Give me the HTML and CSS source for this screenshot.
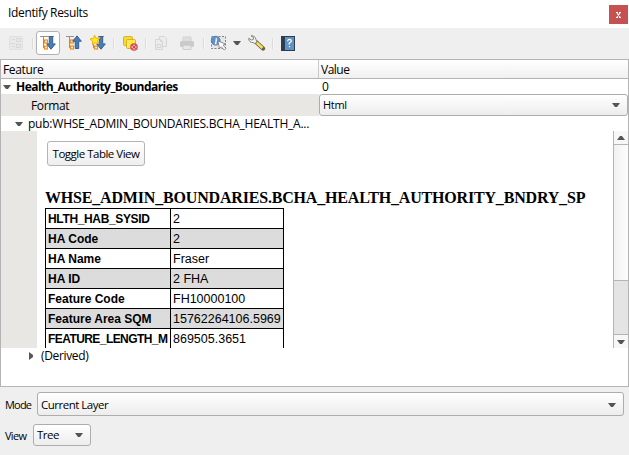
FILE: index.html
```html
<!DOCTYPE html>
<html lang="en">
<head>
<meta charset="utf-8">
<title>Identify Results</title>
<link rel="stylesheet" href="styles.css">
</head>
<body>
<div class="panel">
  <header class="titlebar"><span class="title">Identify Results</span>
    <button class="close" aria-label="Close"><svg width="5" height="6" viewBox="0 0 5 6"><path d="M0 .5h2M3 .5h2M0 5.500h2M3 5.500h2M1 1l3 4M4 1L1 5" stroke="#fff" stroke-width="1.200"/></svg></button>
  </header>
  <div class="toolbar">
    <span class="tool"><svg width="18" height="18" viewBox="0 0 18 18" fill="none" stroke="#d8d8d8"><rect x="2.500" y="2.500" width="13" height="13" rx="1" fill="#e9e9e9" stroke="#e0e0e0"/><path d="M5 5.500h3M5 12.500h3"/><rect x="9.500" y="4.500" width="4" height="3"/><rect x="9.500" y="10.500" width="4" height="3"/><path d="M3 9.500h5"/></svg></span>
    <i class="sep"></i>
    <span class="tool active"><svg width="18" height="18" viewBox="0 0 18 18"><path d="M1 2.500h14M4.500 2v12M4 7.500h3M4 13.500h3" fill="none" stroke="#92938d"/><g fill="#fff3df" stroke="#f58b1b" stroke-width="1.200"><rect x="5.500" y="6" width="3" height="3"/><rect x="5.500" y="12" width="3" height="3"/></g><path d="M10.300 2.500h3.400v7.400h2.600L12 15.200 7.700 9.900h2.600z" fill="#4b7db3" stroke="#315f91"/></svg></span>
    <span class="tool up"><svg width="18" height="18" viewBox="0 0 18 18"><path d="M1 2.500h8M4.500 2v12M4 7.500h3M4 13.500h3" fill="none" stroke="#92938d"/><g fill="#fff3df" stroke="#f58b1b" stroke-width="1.200"><rect x="5.500" y="6" width="3" height="3"/><rect x="5.500" y="12" width="3" height="3"/></g><path d="M10.300 14.500V7.200H7.700L12 1.900l4.300 5.300h-2.600v7.300z" fill="#4b7db3" stroke="#315f91"/></svg></span>
    <span class="tool star"><svg width="18" height="18" viewBox="0 0 18 18"><path d="M9 2.500h6M4.500 8v6M4 13.500h3" fill="none" stroke="#92938d"/><rect x="5.500" y="12" width="3" height="3" fill="#fff3df" stroke="#f58b1b" stroke-width="1.200"/><path d="M10.300 2.500h3.400v7.400h2.600L12 15.200 7.700 9.900h2.600z" fill="#4b7db3" stroke="#315f91"/><path d="M5.600 1.300l1.300 2.900 4-.5-2.500 3 1.500 3-3.500-1-3 2.200.2-3.700L1 5l3.400-.8z" fill="#ffea22" stroke="#f0ad15"/></svg></span>
    <i class="sep"></i>
    <span class="tool clear"><svg width="18" height="18" viewBox="0 0 18 18"><rect x="2.500" y="2.500" width="9" height="9" rx="1" fill="#f5d934" stroke="#d4b522"/><rect x="5.500" y="5.500" width="9" height="9" rx="1" fill="#fce94f" stroke="#d4b522"/><circle cx="13" cy="13" r="3.200" fill="#f0a8a8" stroke="#d7474b" stroke-width="1.200"/><path d="M11 11l4 4M15 11l-4 4" stroke="#d7474b"/></svg></span>
    <i class="sep"></i>
    <span class="tool copy"><svg width="18" height="18" viewBox="0 0 18 18" fill="#ececec" stroke="#d6d6d6"><path d="M7.500 2.500h5l2 2v8h-7z"/><path d="M3.500 5.500h5l2 2v8h-7zM8.500 5.500v2h2M5 10.500h4v3H5z"/></svg></span>
    <span class="tool print"><svg width="18" height="18" viewBox="0 0 18 18"><path d="M5 3h8v5H5z" fill="#dedede" stroke="#d2d2d2"/><rect x="2" y="7" width="14" height="6" rx="1.500" fill="#cacaca"/><path d="M5 11.500h8v4H5z" fill="#e7e7e7" stroke="#cfcfcf"/></svg></span>
    <i class="sep"></i>
    <span class="tool identify"><svg width="20" height="18" viewBox="0 0 20 18"><path d="M2.500 2.500h14v12h-14z" fill="#e7e7e7" stroke="#808080" stroke-dasharray="2 1.500"/><circle cx="6.700" cy="6.700" r="4.400" fill="#5c91ca" stroke="#4e80b6"/><path d="M6.500 6h1l-1 3.500h1M7.300 3.700v1" fill="none" stroke="#fff" stroke-width="1.300"/><path d="M9 7l7.500 3-2.500 1.200 3 3.300-1.800 1.500-2.900-3.300-1.800 2z" fill="#fff" stroke="#777" stroke-width=".8"/></svg></span>
    <svg class="arrow toolarrow" width="8" height="4"><path d="M0 0h8L5 4H3z"/></svg>
    <span class="tool wrench"><svg width="20" height="18" viewBox="0 0 20 18"><path d="M9 8l7 6.500" stroke="#6d6040" stroke-width="4.300" stroke-linecap="round"/><path d="M9.800 8.700l5.700 5.300" stroke="#f4dc62" stroke-width="2.600"/><path d="M4 1.800l2.500 1.700-.2 2L4.500 6 1.700 4.300c-.1 3 2.100 4.700 4.400 4.200l1.800 1.200 2-2-1-2.200C8.700 3 6.500 1.300 4 1.800z" fill="#f4f4f0" stroke="#85857e"/></svg></span>
    <i class="sep"></i>
    <span class="tool help"><svg width="18" height="18" viewBox="0 0 18 18"><path d="M2 2h14v15H2z" fill="#2e3c50"/><path d="M6 3h9v13H6z" fill="#6092c6"/><path d="M8.800 7.200V6.500Q9 5.300 10.500 5.300T12.300 6.700Q12.300 7.700 11 8.500T10.500 10.500M10.500 12v1.300" fill="none" stroke="#fff" stroke-width="1.300"/></svg></span>
  </div>
  <main class="tree">
    <div class="row head"><div class="cell"><span>Feature</span></div><div class="cell val"><span class="t-value">Value</span></div></div>
    <div class="row top"><svg class="arrow" width="8" height="4"><path d="M0 0h8L5 4H3z"/></svg><b class="t-health">Health_Authority_Boundaries</b><span class="zero">0</span></div>
    <div class="row format"><div class="label"><span>Format</span></div><div class="combo"><span class="t-html">Html</span><svg class="arrow" width="8" height="4"><path d="M0 0h8L5 4H3z"/></svg></div></div>
    <div class="row pub"><svg class="arrow" width="8" height="4"><path d="M0 0h8L5 4H3z"/></svg><span class="t-pub">pub:WHSE_ADMIN_BOUNDARIES.BCHA_HEALTH_A...</span></div>
    <div class="view">
      <div class="content">
        <button class="toggle">Toggle Table View</button>
        <h3>WHSE_ADMIN_BOUNDARIES.BCHA_HEALTH_AUTHORITY_BNDRY_SP</h3>
        <table>
          <tr><th class="tight">HLTH_HAB_SYSID</th><td>2</td></tr>
          <tr><th>HA Code</th><td>2</td></tr>
          <tr><th>HA Name</th><td>Fraser</td></tr>
          <tr><th>HA ID</th><td>2 FHA</td></tr>
          <tr><th>Feature Code</th><td>FH10000100</td></tr>
          <tr><th>Feature Area SQM</th><td>15762264106.5969</td></tr>
          <tr><th class="tighter">FEATURE_LENGTH_M</th><td>869505.3651</td></tr>
        </table>
      </div>
      <div class="scroll"><div class="sbtn"><svg class="arrow" width="8" height="4"><path d="M3 0h2l3 4H0z"/></svg></div><div class="thumb"></div><div class="track"></div><div class="sbtn"><svg class="arrow" width="8" height="4"><path d="M0 0h8L5 4H3z"/></svg></div></div>
    </div>
    <div class="row derived"><svg class="arrow" width="4" height="8"><path d="M0 0l4 3v2L0 8z"/></svg><span>(Derived)</span></div>
  </main>
  <footer>
    <div class="field mode"><label>Mode</label><div class="combo"><span>Current Layer</span><svg class="arrow" width="8" height="4"><path d="M0 0h8L5 4H3z"/></svg></div></div>
    <div class="field viewsel"><label>View</label><div class="combo"><span class="t-tree">Tree</span><svg class="arrow" width="8" height="4"><path d="M0 0h8L5 4H3z"/></svg></div></div>
  </footer>
</div>
</body>
</html>
```
FILE: styles.css
```css
* { box-sizing: border-box; }
body { margin: 0; overflow: hidden; background: #efefef; color: #000; font: 12px/16px "Open Sans", "Noto Sans", sans-serif; letter-spacing: -.35px; }
svg { display: block; flex: none; }
button { font: inherit; letter-spacing: inherit; color: inherit; padding: 0; }
.panel { width: 629px; height: 455px; display: flex; flex-direction: column; white-space: nowrap; }
.titlebar { height: 28px; background: #fff; display: flex; align-items: flex-start; justify-content: space-between; padding: 5px 1px 0 8px; }
.close { width: 19px; height: 19px; border: 0; background: #c75050; display: grid; place-items: center; }
.toolbar { height: 31px; display: flex; align-items: center; padding: 0 7px 1px; }
.tool { flex: none; width: 18px; height: 24px; display: grid; place-items: center; }
.sep { flex: none; width: 2px; height: 11px; background: #dadada; border-right: 1px solid #f8f8f8; margin-left: 7px; }
.active { width: 24px; border: 1px solid #b2b2b2; border-radius: 3px; background: #fff; margin-left: 2px; }
.up { margin-left: 5px; }
.star { margin-left: 6px; }
.star + .sep { margin-left: 6px; }
.clear { margin-left: 6px; }
.clear + .sep { margin-left: 6px; }
.copy { margin-left: 5px; }
.print { margin-left: 8px; }
.print + .sep { margin-left: 7px; }
.identify, .wrench { width: 20px; }
.identify { margin-left: 4px; }
.toolarrow { margin-left: 4px; }
.wrench { margin-left: 6px; }
.wrench + .sep { margin-left: 5px; }
.help { margin-left: 5px; }
.arrow { fill: #555; }
.tree { height: 328px; background: #fff; border: 1px solid #b4b4b4; }
.row { display: flex; align-items: center; }
.head { height: 19px; border-bottom: 1px solid #b4b4b4; background: linear-gradient(#fff, #f0f0f0); }
.head .cell { flex: none; width: 317px; padding: 1px 0 0 2px; }
.head .val { width: 310px; border-left: 1px solid #c8c8c8; height: 18px; line-height: 18px; }
.t-value { letter-spacing: -.5px; }
.top { height: 15px; padding-left: 2px; }
.top b { margin-left: 5px; width: 306px; letter-spacing: -.54px; }
.format { height: 22px; }
.label { width: 318px; height: 22px; background: #e8e7e3; padding: 4px 0 0 30px; }
.combo { display: flex; align-items: center; justify-content: space-between; border: 1px solid #adadad; border-radius: 3px; background: linear-gradient(#fff, #ededed); padding: 0 7px 0 3px; }
.format .combo { width: 309px; height: 22px; font-size: 11px; letter-spacing: -.3px; }
.pub { height: 15px; padding-left: 14px; }
.pub span { margin-left: 5px; letter-spacing: -.23px; }
.view { height: 217px; display: flex; background: #e8e7e3; padding-left: 36px; }
.content { width: 576px; background: #fff; overflow: hidden; padding: 10px 0 0 8px; }
.toggle { display: block; width: 98px; height: 25px; margin-left: 2px; border: 1px solid #b4b4b4; border-radius: 3px; background: linear-gradient(#fff, #eee); font-size: 11.5px; letter-spacing: -.5px; }
h3 { margin: 23px 0 1px; height: 18px; font: bold 16px/18px "Liberation Serif", serif; letter-spacing: -.18px; }
table { border-collapse: collapse; table-layout: fixed; width: 239px; font: 12px/17px "Liberation Sans", sans-serif; letter-spacing: 0; }
th, td { border: 1px solid #000; padding: 2px 2px 0; height: 20px; text-align: left; }
th { width: 125px; }
td { font-size: 12.5px; }
.tight { letter-spacing: -.35px; }
.tighter { letter-spacing: -.57px; }
tr:nth-child(even) { background: #dcdcdc; }
.scroll { width: 15px; border-left: 1px solid #b4b4b4; background: #e4e4e4; display: flex; flex-direction: column; }
.sbtn { height: 13px; background: #f7f7f7; display: grid; place-items: center; }
.thumb { height: 137px; border: solid #b4b4b4; border-width: 1px 0; background: linear-gradient(90deg, #f1f1f1, #fdfdfd); }
.track { height: 54px; border-bottom: 1px solid #b4b4b4; }
.derived { height: 16px; padding-left: 28px; }
.derived span { margin-left: 8px; }
footer { padding: 5px 5px 0 5px; font-size: 11.5px; letter-spacing: -.5px; }
.field { display: flex; align-items: center; }
.mode { height: 24px; }
.mode label { width: 32px; padding-top: 1px; font-size: 11px; letter-spacing: -.8px; }
.mode .combo { width: 587px; height: 24px; padding-top: 1px; }
.viewsel { height: 22px; margin-top: 8px; }
.viewsel label { width: 28px; padding-top: 1px; font-size: 11px; letter-spacing: -.7px; }
.viewsel .combo { width: 58px; height: 22px; }
```
